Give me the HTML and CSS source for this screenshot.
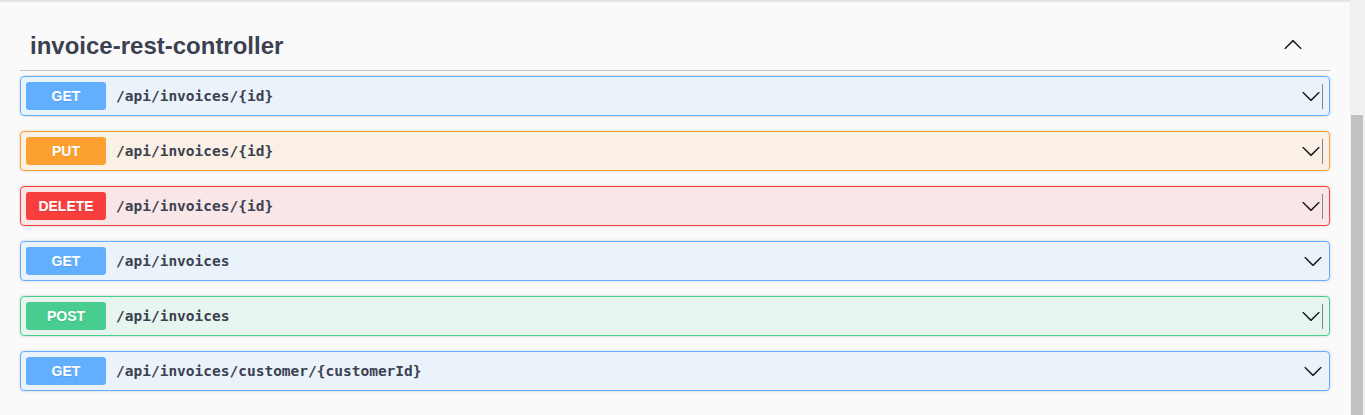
FILE: index.html
```html
<!DOCTYPE html>
<html lang="en">
<head>
<meta charset="utf-8">
<title>invoice-rest-controller</title>
<link rel="stylesheet" href="styles.css">
</head>
<body>
<div class="page">
  <main class="main">
    <div class="top-shadow"></div>
    <section class="tag-section">
      <h3 class="tag-header">
        <span class="tag-name">invoice-rest-controller</span>
        <svg class="tag-arrow" width="20" height="20" viewBox="0 0 20 20" aria-hidden="true"><path d="M17.418 14.908c.272.268.709.268.979 0s.271-.701 0-.969l-7.908-7.83c-.27-.268-.707-.268-.979 0l-7.908 7.83c-.27.268-.27.701 0 .969.271.268.709.268.979 0L10 7.767l7.418 7.141z"/></svg>
      </h3>
      <div class="ops">
        <div class="op op-get">
          <span class="method">GET</span>
          <span class="path">/api/invoices/{id}</span>
          <span class="op-tools"><svg class="op-arrow" width="20" height="20" viewBox="0 0 20 20" aria-hidden="true"><path d="M17.418 6.109c.272-.268.709-.268.979 0s.271.701 0 .969l-7.908 7.83c-.27.268-.707.268-.979 0l-7.908-7.83c-.27-.268-.27-.701 0-.969.271-.268.709-.268.979 0L10 13.25l7.418-7.141z"/></svg><span class="caret"></span></span>
        </div>
        <div class="op op-put">
          <span class="method">PUT</span>
          <span class="path">/api/invoices/{id}</span>
          <span class="op-tools"><svg class="op-arrow" width="20" height="20" viewBox="0 0 20 20" aria-hidden="true"><path d="M17.418 6.109c.272-.268.709-.268.979 0s.271.701 0 .969l-7.908 7.83c-.27.268-.707.268-.979 0l-7.908-7.83c-.27-.268-.27-.701 0-.969.271-.268.709-.268.979 0L10 13.25l7.418-7.141z"/></svg><span class="caret"></span></span>
        </div>
        <div class="op op-delete">
          <span class="method">DELETE</span>
          <span class="path">/api/invoices/{id}</span>
          <span class="op-tools"><svg class="op-arrow" width="20" height="20" viewBox="0 0 20 20" aria-hidden="true"><path d="M17.418 6.109c.272-.268.709-.268.979 0s.271.701 0 .969l-7.908 7.83c-.27.268-.707.268-.979 0l-7.908-7.83c-.27-.268-.27-.701 0-.969.271-.268.709-.268.979 0L10 13.25l7.418-7.141z"/></svg><span class="caret"></span></span>
        </div>
        <div class="op op-get">
          <span class="method">GET</span>
          <span class="path">/api/invoices</span>
          <span class="op-tools"><svg class="op-arrow" width="20" height="20" viewBox="0 0 20 20" aria-hidden="true"><path d="M17.418 6.109c.272-.268.709-.268.979 0s.271.701 0 .969l-7.908 7.83c-.27.268-.707.268-.979 0l-7.908-7.83c-.27-.268-.27-.701 0-.969.271-.268.709-.268.979 0L10 13.25l7.418-7.141z"/></svg></span>
        </div>
        <div class="op op-post">
          <span class="method">POST</span>
          <span class="path">/api/invoices</span>
          <span class="op-tools"><svg class="op-arrow" width="20" height="20" viewBox="0 0 20 20" aria-hidden="true"><path d="M17.418 6.109c.272-.268.709-.268.979 0s.271.701 0 .969l-7.908 7.83c-.27.268-.707.268-.979 0l-7.908-7.83c-.27-.268-.27-.701 0-.969.271-.268.709-.268.979 0L10 13.25l7.418-7.141z"/></svg><span class="caret"></span></span>
        </div>
        <div class="op op-get">
          <span class="method">GET</span>
          <span class="path">/api/invoices/customer/{customerId}</span>
          <span class="op-tools"><svg class="op-arrow" width="20" height="20" viewBox="0 0 20 20" aria-hidden="true"><path d="M17.418 6.109c.272-.268.709-.268.979 0s.271.701 0 .969l-7.908 7.83c-.27.268-.707.268-.979 0l-7.908-7.83c-.27-.268-.27-.701 0-.969.271-.268.709-.268.979 0L10 13.25l7.418-7.141z"/></svg></span>
        </div>
      </div>
    </section>
  </main>
  <div class="scrollbar"><div class="scroll-thumb"></div></div>
</div>
</body>
</html>
```

FILE: styles.css
```css
* { box-sizing: border-box; }

html, body {
  margin: 0;
  padding: 0;
  height: 100%;
  overflow: hidden;
  background: #fafafa;
}

.page {
  display: flex;
  height: 415px;
}

.main {
  flex: 1;
  min-width: 0;
}

.top-shadow {
  height: 3px;
  background: linear-gradient(#dadada, #ededed 50%, #fafafa);
}

.tag-section {
  padding: 19px 20px 0 20px;
}

.tag-header {
  display: flex;
  align-items: center;
  margin: 0 0 5px 0;
  padding: 10px 20px 10px 10px;
  border-bottom: 1px solid rgba(59, 65, 81, 0.3);
  font-family: "Liberation Sans", Arial, sans-serif;
  font-size: 24px;
  line-height: 28px;
  font-weight: bold;
  color: #3b4151;
}

.tag-name {
  flex: 1;
}

.tag-arrow {
  fill: #1b1b1b;
  margin-right: 7px;
  margin-bottom: 5px;
}

.ops {
  display: flex;
  flex-direction: column;
  gap: 15px;
}

.op {
  display: flex;
  align-items: center;
  height: 40px;
  padding: 5px 6px 5px 5px;
  border: 1px solid;
  border-radius: 4px;
  box-shadow: 0 0 3px rgba(0, 0, 0, 0.19);
}

.method {
  width: 80px;
  height: 28px;
  border-radius: 3px;
  display: flex;
  align-items: center;
  justify-content: center;
  font-family: "Liberation Sans", Arial, sans-serif;
  font-size: 14px;
  font-weight: bold;
  color: #fff;
  text-shadow: 0 1px 0 rgba(0, 0, 0, 0.1);
}

.path {
  flex: 1;
  padding: 0 10px;
  font-family: "DejaVu Sans Mono", monospace;
  font-size: 14.5px;
  font-weight: bold;
  color: #3b4151;
}

.op-tools {
  display: flex;
  align-items: center;
}

.op-arrow {
  fill: #1b1b1b;
  display: block;
}

.caret {
  width: 1px;
  height: 25px;
  margin-left: 1px;
  background: #80848e;
}

.op-get { border-color: #61affe; background: rgba(97, 175, 254, 0.1); }
.op-get .method { background: #61affe; }

.op-put { border-color: #fca130; background: rgba(252, 161, 48, 0.1); }
.op-put .method { background: #fca130; }

.op-delete { border-color: #f93e3e; background: rgba(249, 62, 62, 0.1); }
.op-delete .method { background: #f93e3e; }

.op-post { border-color: #49cc90; background: rgba(73, 204, 144, 0.1); }
.op-post .method { background: #49cc90; }

.scrollbar {
  width: 15px;
  flex: none;
  background: #f1f1f1;
  display: flex;
  flex-direction: column;
  padding: 115px 2px 0 1px;
}

.scroll-thumb {
  flex: 1;
  background: #c1c1c1;
}
```
